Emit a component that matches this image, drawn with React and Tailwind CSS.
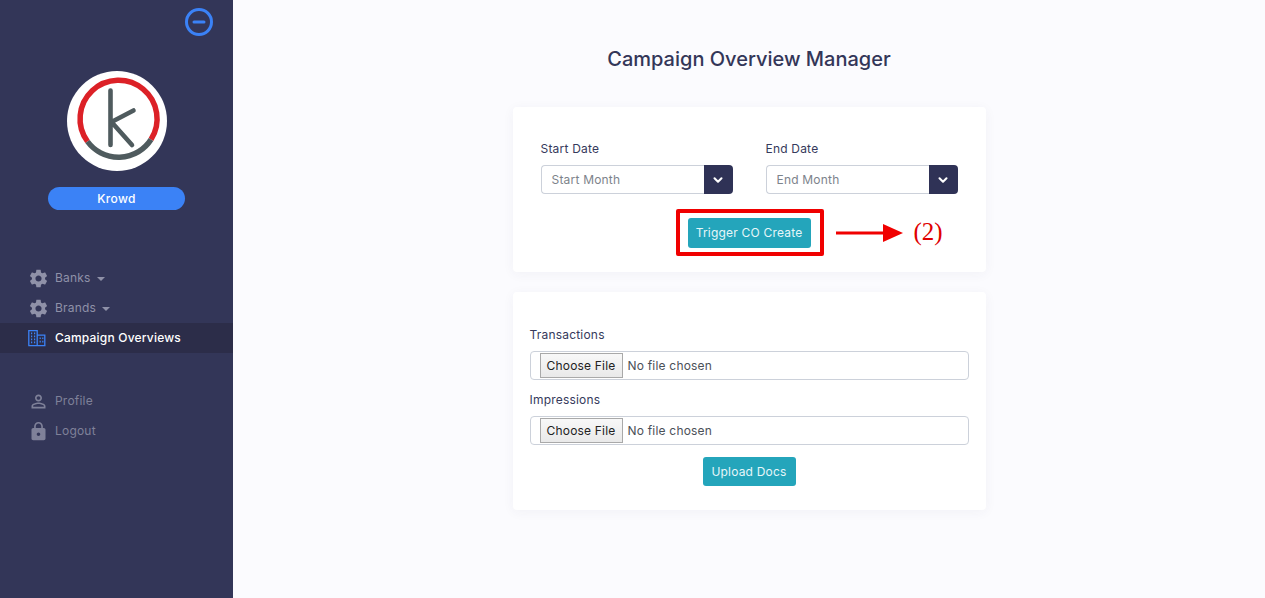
import React from 'react';
import { ChevronDown, MinusCircle } from 'lucide-react';

const FONT = 'font-["Inter","Liberation_Sans",sans-serif]';

const Gear = () => (
  <svg viewBox="0 0 24 24" className="w-[21px] h-[21px] shrink-0" fill="currentColor">
    <path d="M19.43 12.98c.04-.32.07-.64.07-.98s-.03-.66-.07-.98l2.11-1.65c.19-.15.24-.42.12-.64l-2-3.46c-.12-.22-.39-.3-.61-.22l-2.49 1c-.52-.4-1.08-.73-1.69-.98l-.38-2.65C14.46 2.18 14.25 2 14 2h-4c-.25 0-.46.18-.49.42l-.38 2.65c-.61.25-1.17.59-1.69.98l-2.49-1c-.23-.09-.49 0-.61.22l-2 3.46c-.13.22-.07.49.12.64l2.11 1.65c-.04.32-.07.65-.07.98s.03.66.07.98l-2.11 1.65c-.19.15-.24.42-.12.64l2 3.46c.12.22.39.3.61.22l2.49-1c.52.4 1.08.73 1.69.98l.38 2.65c.03.24.24.42.49.42h4c.25 0 .46-.18.49-.42l.38-2.65c.61-.25 1.17-.59 1.69-.98l2.49 1c.23.09.49 0 .61-.22l2-3.46c.12-.22.07-.49-.12-.64l-2.11-1.65zM12 15.5c-1.93 0-3.5-1.57-3.5-3.5s1.57-3.5 3.5-3.5 3.5 1.57 3.5 3.5-1.57 3.5-3.5 3.5z" />
  </svg>
);

const Building = () => (
  <svg viewBox="0 0 18 18" className="w-[18px] h-[18px] shrink-0" fill="none" stroke="#3b82f6" strokeWidth="1.3">
    <path d="M.8 16.5V1.7h8.4v14.8M9.2 6.2h7.6v10.3M.2 16.6h17.3" />
    <path d="M3 4.4h1.2M6 4.4h1.2M3 7.4h1.2M6 7.4h1.2M3 10.4h1.2M6 10.4h1.2M3 13.4h1.2M6 13.4h1.2M11.6 9.2h1.2M14.2 9.2h1.2M11.6 12.6h1.2M14.2 12.6h1.2" strokeWidth="1.6" />
  </svg>
);

const Person = () => (
  <svg viewBox="0 0 24 24" className="w-[21px] h-[21px] shrink-0" fill="currentColor">
    <path d="M12 5.9c1.16 0 2.1.94 2.1 2.1s-.94 2.1-2.1 2.1S9.9 9.16 9.9 8s.94-2.1 2.1-2.1m0 9c2.97 0 6.1 1.46 6.1 2.1v1.1H5.9V17c0-.64 3.13-2.1 6.1-2.1M12 4C9.79 4 8 5.79 8 8s1.79 4 4 4 4-1.79 4-4-1.79-4-4-4zm0 9c-2.67 0-8 1.34-8 4v3h16v-3c0-2.66-5.33-4-8-4z" />
  </svg>
);

const Lock = () => (
  <svg viewBox="0 0 24 24" className="w-[21px] h-[21px] shrink-0" fill="currentColor">
    <path d="M18 8h-1V6c0-2.76-2.24-5-5-5S7 3.24 7 6v2H6c-1.1 0-2 .9-2 2v10c0 1.1.9 2 2 2h12c1.1 0 2-.9 2-2V10c0-1.1-.9-2-2-2zm-6 9c-1.1 0-2-.9-2-2s.9-2 2-2 2 .9 2 2-.9 2-2 2zm3.1-9H8.9V6c0-1.71 1.39-3.1 3.1-3.1 1.71 0 3.1 1.39 3.1 3.1v2z" />
  </svg>
);

const Logo = () => (
  <svg viewBox="0 0 100 100" className="w-[100px] h-[100px]">
    <circle cx="50" cy="50" r="50" fill="#fff" />
    <path d="M20.5 70.5A38.5 38.5 0 1 1 84 68.5" fill="none" stroke="#dc2127" strokeWidth="5.5" />
    <path d="M20.5 70.5A38.5 38.5 0 0 0 84 68.5" fill="none" stroke="#4f5b5e" strokeWidth="5.5" />
    <path d="M43.5 19.5V74M43.5 51.5L66.5 39.5M44.5 51L65 74" fill="none" stroke="#4f5b5e" strokeWidth="4.6" strokeLinecap="round" />
  </svg>
);

const NavItem = ({ icon, label, caret, active, dim }) => (
  <div className={`flex items-center h-[30px] pl-[28px] ${active ? 'bg-[#2c2d49] text-white font-medium' : dim ? 'text-[#7f8199]' : 'text-[#8f91a8]'}`}>
    <span className="w-[27px] flex">{icon}</span>
    <span className="text-xs tracking-[0.2px]">{label}</span>
    {caret && <span className="ml-[6px] mt-[1px] border-x-[4px] border-x-transparent border-t-[4px] border-t-[#8f91a8]" />}
  </div>
);

const MonthSelect = ({ label, placeholder }) => (
  <div className="w-[192px]">
    <div className="text-xs text-[#363a5c] tracking-[0.2px] mb-[7px] leading-[18px]">{label}</div>
    <div className="flex h-[29px]">
      <div className="flex-1 flex items-center pl-[10px] text-xs text-[#7d838b] tracking-[0.2px] border border-r-0 border-[#ccd1da] rounded-l-[4px]">{placeholder}</div>
      <div className="w-[29px] flex items-center justify-center bg-[#2f3256] rounded-r-[4px] text-white">
        <ChevronDown size={14} strokeWidth={3.5} />
      </div>
    </div>
  </div>
);

const FileField = ({ label }) => (
  <div>
    <div className="text-xs text-[#363a5c] tracking-[0.2px] leading-[18px] mb-[7px]">{label}</div>
    <div className="h-[29px] border border-[#ccd1da] rounded-[4px] pl-[9px] flex items-center bg-white">
      <input
        type="file"
        className="w-full h-[25px] text-xs text-[#4b5058] tracking-[0.2px] file:h-[25px] file:w-[83px] file:mr-[5px] file:text-[#222] file:border file:border-[#a9a9a9] file:bg-[linear-gradient(#f8f8f8,#e9e9e9)]"
      />
    </div>
  </div>
);

export default function App() {
  return (
    <div className={`${FONT} flex h-[598px] w-[1265px] overflow-hidden bg-[#fbfbfe]`}>
      <aside className="w-[233px] shrink-0 bg-[#333658] flex flex-col">
        <div className="flex justify-end pt-[7px] pr-[19px] text-[#3b82f6] h-[71px]">
          <MinusCircle size={30} strokeWidth={2.4} />
        </div>
        <div className="flex justify-center">
          <Logo />
        </div>
        <div className="mt-[16px] mx-[48px] h-[23px] rounded-full bg-[#3b82f6] text-white text-xs font-medium tracking-[0.3px] flex items-center justify-center">
          Krowd
        </div>
        <nav className="mt-[53px]">
          <NavItem icon={<Gear />} label="Banks" caret />
          <NavItem icon={<Gear />} label="Brands" caret />
          <NavItem icon={<Building />} label="Campaign Overviews" active />
        </nav>
        <nav className="mt-[33px]">
          <NavItem icon={<Person />} label="Profile" dim />
          <NavItem icon={<Lock />} label="Logout" dim />
        </nav>
      </aside>

      <main className="flex-1 flex flex-col items-center">
        <h1 className="mt-[44px] text-[20px] leading-[30px] font-medium text-[#333658]">Campaign Overview Manager</h1>

        <div className="relative mt-[33px] w-[473px] h-[165px] bg-white rounded-[4px] shadow-[0_2px_12px_rgba(50,50,93,0.05)] pt-[33px] px-[28px]">
          <div className="flex gap-[33px]">
            <MonthSelect label="Start Date" placeholder="Start Month" />
            <MonthSelect label="End Date" placeholder="End Month" />
          </div>
          <div className="mt-[24px] pl-[147px]">
            <button className="h-[30px] w-[123px] rounded-[3px] bg-[#24a5bb] text-[#e6f6f9] text-xs tracking-[0.2px]">Trigger CO Create</button>
          </div>

          {/* red annotation drawn over the card */}
          <div className="absolute left-[163px] top-[102px] w-[148px] h-[47px] border-[4px] border-[#f00000] rounded-[2px]" />
          <svg className="absolute left-[323px] top-[116px] w-[68px] h-[20px]" viewBox="0 0 68 20">
            <path d="M0 10h48" stroke="#f00000" strokeWidth="3" />
            <path d="M47 1l20 9-20 9z" fill="#f00000" />
          </svg>
          <span className="absolute left-[401px] top-[109px] text-[25px] leading-[32px] text-[#e00000] font-['Liberation_Serif',serif]">(2)</span>
        </div>

        <div className="mt-[20px] w-[473px] h-[218px] bg-white rounded-[4px] shadow-[0_2px_12px_rgba(50,50,93,0.05)] pt-[34px] px-[17px]">
          <div className="flex flex-col gap-[11px]">
            <FileField label="Transactions" />
            <FileField label="Impressions" />
          </div>
          <div className="flex justify-center mt-[12px]">
            <button className="h-[29px] w-[93px] rounded-[3px] bg-[#24a5bb] text-[#e6f6f9] text-xs tracking-[0.2px]">Upload Docs</button>
          </div>
        </div>
      </main>
    </div>
  );
}
